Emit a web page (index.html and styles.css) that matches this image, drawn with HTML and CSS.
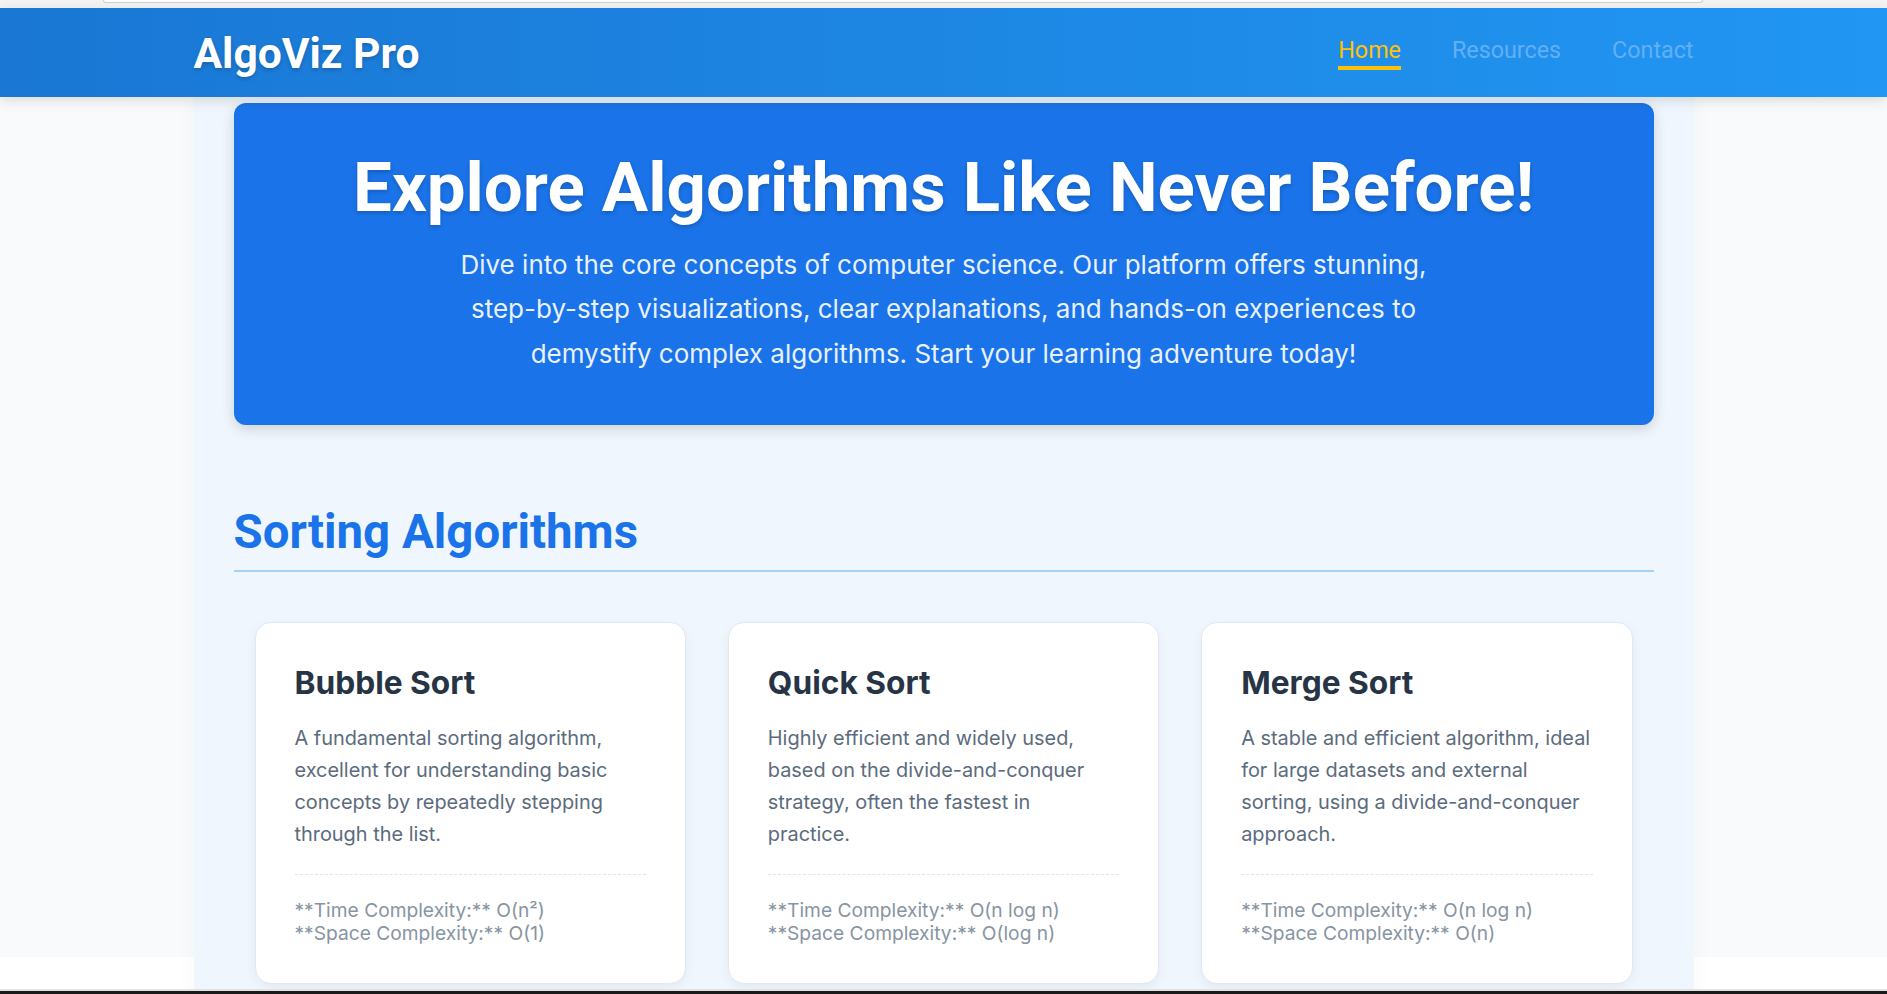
FILE: index.html
```html
<!DOCTYPE html>
<html lang="en">
<head>
<meta charset="utf-8">
<title>AlgoViz Pro</title>
<link rel="stylesheet" href="styles.css">
</head>
<body>
<div class="chrome-strip"><div class="chrome-tab"></div></div>
<header class="site-header">
  <div class="header-inner">
    <div class="logo">AlgoViz Pro</div>
    <nav class="nav">
      <a class="nav-link active" href="#">Home</a>
      <a class="nav-link" href="#">Resources</a>
      <a class="nav-link" href="#">Contact</a>
    </nav>
  </div>
</header>
<main class="container">
  <section class="hero">
    <h1 class="hero-title">Explore Algorithms Like Never Before!</h1>
    <p class="hero-text">Dive into the core concepts of computer science. Our platform offers stunning, step-by-step visualizations, clear explanations, and hands-on experiences to demystify complex algorithms. Start your learning adventure today!</p>
  </section>
  <h2 class="section-title">Sorting Algorithms</h2>
  <div class="card-grid">
    <article class="card">
      <h3 class="card-title">Bubble Sort</h3>
      <p class="card-desc">A fundamental sorting algorithm, excellent for understanding basic concepts by repeatedly stepping through the list.</p>
      <div class="card-meta">**Time Complexity:** O(n²)<br>**Space Complexity:** O(1)</div>
    </article>
    <article class="card">
      <h3 class="card-title">Quick Sort</h3>
      <p class="card-desc">Highly efficient and widely used, based on the divide-and-conquer strategy, often the fastest in practice.</p>
      <div class="card-meta">**Time Complexity:** O(n log n)<br>**Space Complexity:** O(log n)</div>
    </article>
    <article class="card">
      <h3 class="card-title">Merge Sort</h3>
      <p class="card-desc">A stable and efficient algorithm, ideal for large datasets and external sorting, using a divide-and-conquer approach.</p>
      <div class="card-meta">**Time Complexity:** O(n log n)<br>**Space Complexity:** O(n)</div>
    </article>
  </div>
</main>
<div class="window-edge"></div>
</body>
</html>
```
FILE: styles.css
```css
* { box-sizing: border-box; }
body {
  margin: 0;
  font-family: Inter, "Noto Sans", sans-serif;
  color: #2c3e50;
  background: linear-gradient(#f8fafc 0, #f8fafc 957px, #ffffff 957px) no-repeat;
}
.chrome-strip { height: 8px; background: #f3f3f3; }
.chrome-tab {
  margin-left: 103px; width: 1600px; height: 3px; background: #fff;
  border: 1px solid #cfcfcf; border-top: none; border-radius: 0 0 8px 8px;
}
.site-header {
  height: 89px;
  background: linear-gradient(90deg, #1a77d4, #2196f3);
  box-shadow: 0 4px 12px rgba(0,0,0,0.12);
  position: relative; z-index: 2;
}
.header-inner {
  width: 1500px; height: 100%; margin: 0 auto;
  display: flex; justify-content: space-between; align-items: center;
}
.logo {
  font-family: Roboto, sans-serif; font-weight: 700; font-size: 42.6px;
  color: #fff; text-shadow: 0 2px 4px rgba(0,0,0,0.2);
}
.nav { display: flex; gap: 51px; align-items: center; }
.nav-link {
  font-family: Roboto, sans-serif; font-size: 23.3px; color: #62aff3;
  text-decoration: none; padding-bottom: 2px; border-bottom: 4px solid transparent;
}
.nav-link.active { color: #ffc107; border-bottom-color: #ffc107; }
.container {
  width: 1500px; margin: 0 auto; background: #f0f6fd;
  padding: 6px 40px 40px;
  box-shadow: 0 0 20px rgba(0,0,0,0.03);
}
.hero {
  background: #1a73e8; border-radius: 12px; padding: 44px 40px 49px;
  text-align: center; box-shadow: 0 4px 14px rgba(0,0,0,0.15);
}
.hero-title {
  margin: 0 0 13px; font-family: Roboto, sans-serif; font-size: 69px; line-height: 1.2;
  font-weight: 700; color: #fff; text-shadow: 0 2px 4px rgba(0,0,0,0.2);
}
.hero-text {
  margin: 0 auto; max-width: 990px; font-size: 26px; line-height: 44.5px; color: #e8f1fd;
}
.section-title {
  margin: 79px 0 50px; padding-bottom: 9px; border-bottom: 2px solid #a5d2fa;
  font-family: Roboto, sans-serif; font-size: 47.4px; line-height: 1.2;
  font-weight: 700; color: #1a73e8;
}
.card-grid {
  display: grid; grid-template-columns: repeat(3, 1fr); gap: 42px; padding: 0 21px;
}
.card {
  background: #fff; border: 1px solid #e3e8ef; border-radius: 16px; padding: 40px 39px 38px;
  box-shadow: 0 4px 12px rgba(0,0,0,0.05);
}
.card-title { margin: 0 0 19px; font-size: 31.7px; line-height: 40px; font-weight: 700; color: #263445; }
.card-desc {
  margin: 0 0 24px; padding-right: 1.7px;
  font-size: 19.9px; line-height: 32px; color: #5b6b7d;
}
.card-meta {
  border-top: 1px dashed #dfe5ec; padding-top: 24px;
  font-size: 19.2px; line-height: 23px; color: #8794a2;
}
.window-edge {
  position: fixed; left: 0; right: 0; bottom: 0; height: 5px;
  background: #1a1a1a; border-top: 2px solid #e2e2e2;
}
```
